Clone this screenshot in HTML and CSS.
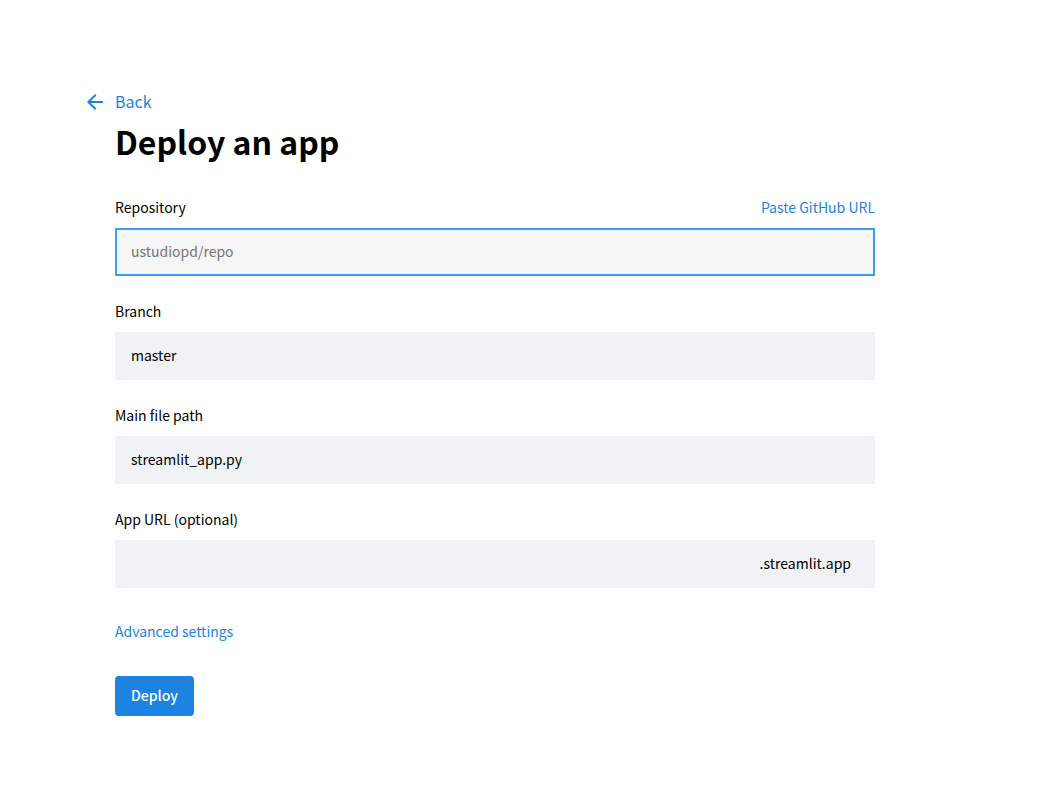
FILE: index.html
```html
<!DOCTYPE html>
<html lang="en">
<head>
<meta charset="utf-8">
<meta name="viewport" content="width=device-width, initial-scale=1">
<title>Deploy an app</title>
<link rel="stylesheet" href="styles.css">
</head>
<body>
<main class="page">
  <a class="back" href="#">
    <svg class="back-icon" viewBox="0 0 24 24" aria-hidden="true"><path d="M20 11H7.83l5.59-5.59L12 4l-8 8 8 8 1.41-1.41L7.83 13H20v-2z"/></svg>
    <span>Back</span>
  </a>
  <h1 class="title">Deploy an app</h1>
  <form class="form">
    <div class="field">
      <div class="field-head">
        <label for="repo">Repository</label>
        <a class="link" href="#">Paste GitHub URL</a>
      </div>
      <div class="box box-active"><input class="input" id="repo" type="text" placeholder="ustudiopd/repo"></div>
    </div>
    <div class="field">
      <div class="field-head"><label for="branch">Branch</label></div>
      <div class="box"><input class="input" id="branch" type="text" value="master"></div>
    </div>
    <div class="field">
      <div class="field-head"><label for="path">Main file path</label></div>
      <div class="box"><input class="input" id="path" type="text" value="streamlit_app.py"></div>
    </div>
    <div class="field">
      <div class="field-head"><label for="url">App URL (optional)</label></div>
      <div class="box"><input class="input" id="url" type="text"><span class="suffix">.streamlit.app</span></div>
    </div>
    <a class="link advanced" href="#">Advanced settings</a>
    <button class="deploy" type="button">Deploy</button>
  </form>
</main>
</body>
</html>
```

FILE: styles.css
```css
* {
  box-sizing: border-box;
}

body {
  margin: 0;
  background: #fff;
  color: #000;
  font-family: "Source Sans Pro", "Noto Sans CJK SC", sans-serif;
  font-size: 14px;
  line-height: 22px;
}

a {
  color: #1c83e1;
  text-decoration: none;
}

.page {
  max-width: 960px;
  padding: 90px 85px 64px 115px;
}

.back {
  display: flex;
  width: fit-content;
  align-items: flex-start;
  gap: 8px;
  margin-left: -32px;
  font-size: 16px;
}

.back-icon {
  width: 24px;
  height: 24px;
  fill: currentColor;
}

.title {
  margin: 6px 0 34px;
  font-size: 32px;
  line-height: 42px;
  font-weight: 700;
}

.form {
  display: flex;
  flex-direction: column;
  align-items: stretch;
}

.field {
  margin-bottom: 24px;
}

.field-head {
  display: flex;
  justify-content: space-between;
  margin-bottom: 10px;
}

.box {
  display: flex;
  align-items: center;
  height: 48px;
  padding: 0 14px 2px;
  border: 2px solid #f0f2f6;
  background: #f0f2f6;
}

.box-active {
  border-color: #3d9df3;
  background: #f6f6f6;
}

.input {
  flex: 1;
  min-width: 0;
  padding: 0;
  border: 0;
  outline: 0;
  background: transparent;
  color: #000;
  font: inherit;
}

.input::placeholder {
  color: #757575;
  opacity: 1;
}

.suffix {
  margin-right: 8px;
}

.advanced {
  align-self: flex-start;
  margin-top: 8px;
}

.deploy {
  align-self: flex-start;
  height: 40px;
  margin-top: 34px;
  padding: 0 16px 2px;
  border: 0;
  border-radius: 4px;
  background: #1c83e1;
  color: #fff;
  font: inherit;
  font-weight: 500;
}
```
